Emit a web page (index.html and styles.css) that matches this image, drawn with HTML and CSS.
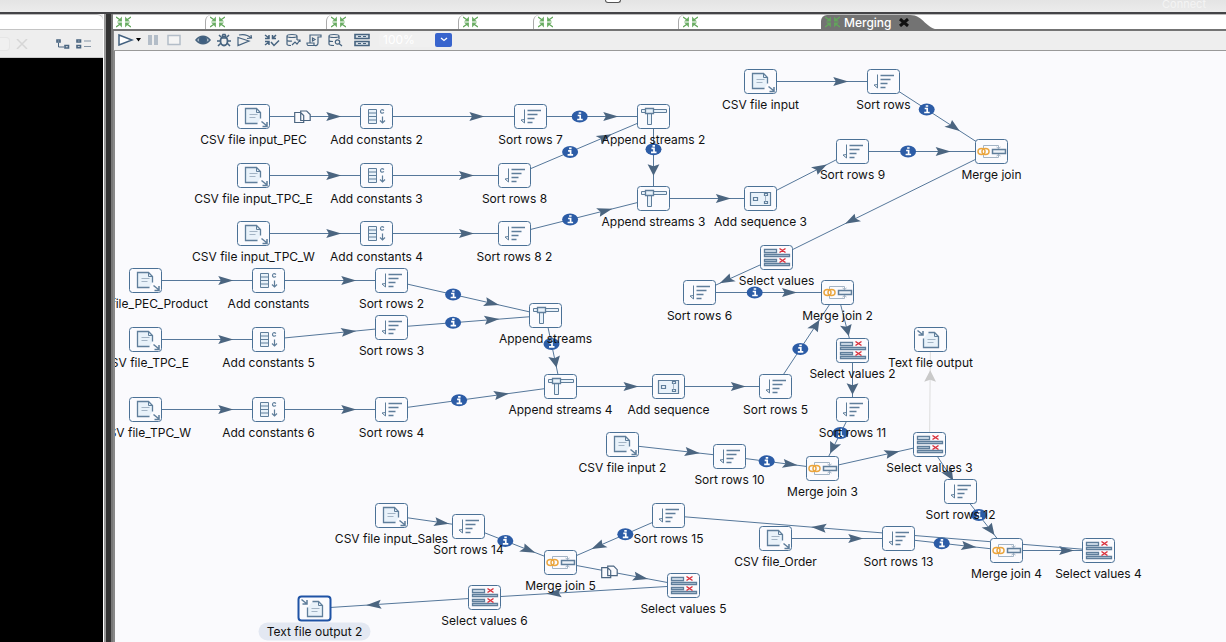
FILE: index.html
```html
<!DOCTYPE html>
<html lang="en">
<head>
<meta charset="utf-8">
<title>Merging</title>
<link rel="stylesheet" href="styles.css">
</head>
<body>
<svg class="defs" aria-hidden="true">
  <symbol id="trans" viewBox="0 0 15 12"><path d="M0 1l5 3.500M15 1l-5 3.500M0 11l5-3.500M15 11l-5-3.500" fill="none" stroke="currentColor" stroke-width="1.400"/><path d="M6 .500v5H1zM9 .500v5h5zM6 11.500v-5H1zM9 11.500v-5h5z" fill="currentColor" opacity=".85"/></symbol>
</svg>
<header class="titlebar"><span class="handle"></span><span class="connect">Connect</span></header>
<div class="workspace">
  <aside class="side">
    <div class="side-tabs"></div>
    <div class="side-tools">
      <input class="filter" type="text" aria-label="Filter">
      <button class="clear" aria-label="Clear filter"><svg width="12" height="10" viewBox="0 0 12 10"><path d="M1 0l10 10M11 0L1 10" stroke="#d6d6d6" stroke-width="1.500"/></svg></button>
      <button aria-label="Expand all"><svg width="14" height="10" viewBox="0 0 14 10" fill="none" stroke="#4a6580"><path d="M1 1h3v2H1zM9 6.500h3.500v2.500H9z" stroke-width="1.600"/><path d="M2.500 4v4H8"/></svg></button>
      <button aria-label="Collapse all"><svg width="16" height="10" viewBox="0 0 16 10" fill="none" stroke="#4a6580"><path d="M1 1h3.500v2H1zM1 6.500h3.500v2.300H1z" stroke-width="1.600"/><path d="M8 2h7M8 7.500h7" stroke="#8495a6"/></svg></button>
    </div>
    <div class="tree"></div>
  </aside>
  <div class="sash"></div>
  <main class="editor">
    <nav class="tabs">
      <button class="tab w92" aria-label="Tab 1"><svg class="tab-icon"><use href="#trans"/></svg></button>
      <button class="tab w121" aria-label="Tab 2"><svg class="tab-icon"><use href="#trans"/></svg></button>
      <button class="tab w132" aria-label="Tab 3"><svg class="tab-icon"><use href="#trans"/></svg></button>
      <button class="tab w75" aria-label="Tab 4"><svg class="tab-icon"><use href="#trans"/></svg></button>
      <button class="tab w145" aria-label="Tab 5"><svg class="tab-icon"><use href="#trans"/></svg></button>
      <button class="tab w143" aria-label="Tab 6"><svg class="tab-icon"><use href="#trans"/></svg></button>
      <button class="tab active"><svg class="tab-icon"><use href="#trans"/></svg><span>Merging</span><svg class="close" width="12" height="9" viewBox="0 0 12 9"><path d="M2 1l8 7M10 1L2 8" stroke="#111" stroke-width="3"/></svg></button>
      <svg class="tab-tail" width="30" height="15" viewBox="0 0 30 15"><path d="M0 0C14 0 15 14 30 15H0z" fill="#737373"/></svg>
    </nav>
    <div class="toolbar">
      <div class="group run">
        <button aria-label="Run"><svg width="16" height="12" viewBox="0 0 16 12"><path d="M1 1l13 5-13 5z" fill="#fff" stroke="#43617f" stroke-width="1.500"/></svg></button>
        <button aria-label="Run options"><svg width="6" height="4" viewBox="0 0 6 4"><path d="M0 0h5L2.500 3.500z"/></svg></button>
      </div>
      <div class="group halt">
        <button aria-label="Pause"><svg width="12" height="12" viewBox="0 0 12 12" fill="#b3bdc8"><path d="M1 1h4v10H1zM7 1h4v10H7z"/></svg></button>
        <button aria-label="Stop"><svg width="14" height="12" viewBox="0 0 14 12"><path d="M1 1.500h12v9H1z" fill="#f4f4f4" stroke="#b3bdc8" stroke-width="1.500"/></svg></button>
      </div>
      <div class="group">
        <button aria-label="Preview"><svg class="tool" viewBox="0 0 16 14"><path d="M1 7c4-5 10-5 14 0-4 5-10 5-14 0z" fill="#a9b9c9" stroke-width="1.500"/><ellipse cx="8" cy="7" rx="3.500" ry="3.500" fill="#3f5f80"/></svg></button>
        <button aria-label="Debug"><svg class="tool" viewBox="0 0 16 14"><ellipse cx="8" cy="8" rx="3.500" ry="4.500" stroke-width="1.800"/><path d="M5 5h6M5 4L3 2M11 4l2-2M5 8H1M11 8h4M5 10l-3 3M11 10l3 3M6 3.500l1-2h2l1 2" stroke-width="1.500"/></svg></button>
        <button aria-label="Replay"><svg class="tool" viewBox="0 0 16 14"><path d="M1 4.500v8l11-4.500zM2 2c5-1 9 0 12 3M10 5.500l4.500-.5-.5-3"/></svg></button>
      </div>
      <div class="group">
        <button aria-label="Verify"><svg class="tool" viewBox="0 0 16 14"><path d="M1 2l4 3M5 2v3.500H1M12 2L9 5M8.500 2v3.500H12M1 12l4-3M5 12V8.500H1M7 9l3 3.500 5-5" stroke-width="1.500"/></svg></button>
        <button aria-label="Impact"><svg class="tool" viewBox="0 0 16 14"><path d="M12 7V3c0-2-10-2-10 0v8c0 1 2 1.500 4 1.500M2 3c0 2 10 2 10 0M2 7c0 1 3 1.500 5 1M7 12l3-3 2 2 3-4M12 7h3v2"/></svg></button>
        <button aria-label="SQL"><svg class="tool" viewBox="0 0 16 14"><path d="M4 10V2h11v2h-3v6c0 3-3 2.500-3 2.500H2c-1 0-1-2.500-1-2.500h7v2M6.500 5v3L9 6.500z"/></svg></button>
        <button aria-label="Explore database"><svg class="tool" viewBox="0 0 16 14"><path d="M12 6V3C12 1 2 1 2 3v8c0 1 2 1.500 5 1.500M2 3c0 2 10 2 10 0M2 7c0 1 2 1.500 4 1.500"/><circle cx="10.500" cy="9" r="2.200"/><path d="M12 10.500l3 2.500"/></svg></button>
      </div>
      <div class="group">
        <button aria-label="Show results"><svg class="tool" viewBox="0 0 16 14"><path d="M1 1.500h14v4H1zM1 8.500h14v4H1z" fill="#dce3ea" stroke-width="1.600"/><path d="M4 3.500h3M9 3.500h3M4 10.500h3M9 10.500h3"/></svg></button>
      </div>
      <label class="zoom"><select aria-label="Zoom"><option>100%</option></select><span class="drop"><svg width="8" height="5" viewBox="0 0 8 5"><path d="M1 1l3 2.500L7 1" fill="none" stroke="#fff" stroke-width="1.300"/></svg></span></label>
    </div>
    <svg class="canvas" id="canvas" role="img" aria-label="Transformation graph"></svg>
  </main>
</div>
<script src="graph.js"></script>
</body>
</html>
```

FILE: styles.css
```css
* { box-sizing: border-box; }
body {
  margin: 0;
  height: 100vh;
  display: flex;
  flex-direction: column;
  overflow: hidden;
  font-family: Inter, "Liberation Sans", sans-serif;
  font-size: 12px;
  background: #eee;
}
button { border: 0; padding: 0; background: none; font: inherit; display: flex; align-items: center; }
svg { display: block; }
.defs { position: absolute; width: 0; height: 0; }

.titlebar {
  height: 14px;
  flex: none;
  display: grid;
  grid-template-columns: 1fr 16px 1fr;
  background: linear-gradient(#e4e4e4, #ececec);
  border-bottom: 2px solid #444447;
}
.handle { grid-column: 2; height: 3px; margin-right: -4px; margin-left: 4px; background: #fff; border: 1px solid #555; border-top: 0; border-radius: 0 0 3px 3px; }
.handle { margin: 0; }
.connect { grid-column: 3; justify-self: end; padding-right: 20px; font-size: 11px; line-height: 9px; color: #f4f4f4; }

.workspace { flex: 1; display: flex; min-height: 0; }
.side { width: 104px; flex: none; display: flex; flex-direction: column; border-right: 1px solid #fff; }
.side-tabs { height: 16px; background: #fff; border-top: 1px solid #bbb; border-bottom: 1px solid #c4c4c4; border-radius: 0 6px 0 0; }
.side-tools { height: 28px; display: flex; align-items: center; gap: 6px; border-bottom: 1px solid #ccc; }
.filter { width: 10px; height: 14px; padding: 0; border: 1px solid #e6e6e6; border-left: 0; border-radius: 0 4px 4px 0; background: #f0f0f0; }
.clear { margin-right: 22px; }
.tree { flex: 1; background: #000; }
.sash { width: 9px; flex: none; background: #333; border-left: 2px solid #999; border-right: 2px solid #777; }

.editor { flex: 1; min-width: 0; display: flex; flex-direction: column; }
.tabs { height: 17px; flex: none; display: flex; background: #fff; border-top: 1px solid #bbb; border-bottom: 2px solid #737373; }
.tab { padding-left: 4px; flex: none; border-left: 1px solid #aaa; border-top-left-radius: 6px; }
.tab:first-child { border-left: 0; padding-left: 3px; }
.tab-icon { width: 15px; height: 12px; color: #62a85a; }
.w75 { width: 75px; }
.w92 { width: 92px; }
.w121 { width: 121px; }
.w132 { width: 132px; }
.w143 { width: 143px; }
.w145 { width: 145px; }
.active { gap: 4px; background: #737373; border-left: 0; color: #fff; font-weight: 500; }
.close { margin-left: 2px; }
.toolbar { height: 20px; flex: none; display: flex; align-items: center; gap: 11px; padding: 0 0 2px 4px; background: #eee; border-left: 1px solid #888; border-bottom: 1px solid #999; }
.group { display: flex; align-items: center; gap: 5px; }
.run { gap: 2px; }
.group.halt { gap: 8px; margin-left: -6px; margin-right: 3px; }
.tool { width: 16px; height: 14px; fill: none; stroke: #46637f; stroke-width: 1.2; }
.zoom { display: flex; height: 14px; margin-left: -2px; background: #f0f0f0; border-radius: 3px; }
.zoom select { width: 56px; padding: 0 4px; border: 0; background: none; appearance: none; color: #fff; font: inherit; line-height: 14px; }
.drop { width: 17px; display: grid; place-items: center; border-radius: 2px; background: #3864cd; }

.canvas { flex: 1; width: 100%; min-height: 0; overflow: hidden; background: #fafafd; border-left: 2px solid #888; }
.hop { stroke: #55779a; stroke-width: 1; }
.arrow { fill: #4b6580; }
.hop.off { stroke: #dedede; }
.arrow.off { fill: #c9c9c9; }
.badge { fill: #2c5ca6; }
.badge-mark { fill: none; stroke: #fff; stroke-width: 1.7; }
.copy { fill: #fafafd; stroke: #4b6580; stroke-width: 1.2; }
.box { fill: #fbfbfe; stroke: #4b7196; stroke-width: 1; }
.box.selected { stroke: #1f53a5; stroke-width: 2; }
.glyph { fill: none; stroke: #5f7e9b; stroke-width: 1; }
.glyph .pale { fill: #e9f2fa; }
.glyph .soft { stroke: #a3b4c5; }
.glyph .ring { stroke: #eaa53d; stroke-width: 1.5; }
.glyph .cross { stroke: #d9303c; stroke-width: 1.5; }
.label { fill: #111; font-size: 12px; text-anchor: middle; }
.pill { fill: #e3e8f2; }
```

FILE: graph.js
```js
// Scroll position of the canvas over the graph.
const SCROLL = { x: 115, y: 51 };
// Horizontal to vertical ratio of the drawing.
const ASPECT = 1.31;

const steps = {
  pec: ["csv", 253, 116, "CSV file input_PEC"],
  tpcE: ["csv", 253, 175, "CSV file input_TPC_E"],
  tpcW: ["csv", 253, 233, "CSV file input_TPC_W"],
  c2: ["constants", 376, 116, "Add constants 2"],
  c3: ["constants", 376, 175, "Add constants 3"],
  c4: ["constants", 376, 233, "Add constants 4"],
  s7: ["sort", 530, 116, "Sort rows 7"],
  s8: ["sort", 514, 175, "Sort rows 8"],
  s82: ["sort", 514, 233, "Sort rows 8 2"],
  a2: ["append", 653, 116, "Append streams 2"],
  a3: ["append", 653, 198, "Append streams 3"],
  q3: ["sequence", 760, 198, "Add sequence 3"],
  input: ["csv", 760, 81, "CSV file input"],
  s: ["sort", 883, 81, "Sort rows"],
  s9: ["sort", 852, 151, "Sort rows 9"],
  m: ["merge", 991, 151, "Merge join"],
  v: ["select", 776, 257, "Select values"],
  s6: ["sort", 699, 292, "Sort rows 6"],
  m2: ["merge", 837, 292, "Merge join 2"],
  v2: ["select", 852, 350, "Select values 2"],
  out: ["output", 930, 339, "Text file output"],
  product: ["csv", 145, 280, "CSV file_PEC_Product"],
  fileE: ["csv", 145, 339, "CSV file_TPC_E"],
  fileW: ["csv", 145, 409, "CSV file_TPC_W"],
  c: ["constants", 268, 280, "Add constants"],
  c5: ["constants", 268, 339, "Add constants 5"],
  c6: ["constants", 268, 409, "Add constants 6"],
  s2: ["sort", 391, 280, "Sort rows 2"],
  s3: ["sort", 391, 327, "Sort rows 3"],
  s4: ["sort", 391, 409, "Sort rows 4"],
  a: ["append", 545, 315, "Append streams"],
  a4: ["append", 560, 386, "Append streams 4"],
  q: ["sequence", 668, 386, "Add sequence"],
  s5: ["sort", 775, 386, "Sort rows 5"],
  s11: ["sort", 852, 409, "Sort rows 11"],
  input2: ["csv", 622, 444, "CSV file input 2"],
  s10: ["sort", 729, 456, "Sort rows 10"],
  m3: ["merge", 822, 468, "Merge join 3"],
  v3: ["select", 929, 444, "Select values 3"],
  s12: ["sort", 960, 491, "Sort rows 12"],
  m4: ["merge", 1006, 550, "Merge join 4"],
  v4: ["select", 1098, 550, "Select values 4"],
  order: ["csv", 775, 538, "CSV file_Order"],
  s13: ["sort", 898, 538, "Sort rows 13"],
  s15: ["sort", 668, 515, "Sort rows 15"],
  sales: ["csv", 391, 515, "CSV file input_Sales"],
  s14: ["sort", 468, 526, "Sort rows 14"],
  m5: ["merge", 560, 562, "Merge join 5"],
  v5: ["select", 683, 585, "Select values 5"],
  v6: ["select", 484, 597, "Select values 6"],
  out2: ["output", 314, 608, "Text file output 2", true]
};

const hops = [
  ["pec", "c2", "copy"], ["tpcE", "c3"], ["tpcW", "c4"], ["c2", "s7"], ["c3", "s8"], ["c4", "s82"],
  ["s7", "a2", "info"], ["s8", "a2", "info"], ["s82", "a3", "info"], ["a2", "a3", "info"],
  ["a3", "q3"], ["q3", "s9"], ["input", "s"], ["s", "m", "info"], ["s9", "m", "info"],
  ["m", "v"], ["v", "s6"], ["s6", "m2", "info"], ["m2", "v2"], ["v2", "s11"],
  ["product", "c"], ["fileE", "c5"], ["fileW", "c6"], ["c", "s2"], ["c5", "s3"], ["c6", "s4"],
  ["s2", "a", "info"], ["s3", "a", "info"], ["a", "a4", "info"], ["s4", "a4", "info"],
  ["a4", "q"], ["q", "s5"], ["s5", "m2", "info"], ["s11", "m3", "info"],
  ["input2", "s10"], ["s10", "m3", "info"], ["m3", "v3"], ["v3", "out", "off"],
  ["v3", "s12"], ["s12", "m4", "info"], ["order", "s13"], ["s13", "m4", "info"],
  ["m4", "v4"], ["v4", "s15"], ["s15", "m5", "info"], ["sales", "s14"], ["s14", "m5", "info"],
  ["m5", "v5", "copy"], ["v5", "v6"], ["v6", "out2"]
];

// Glyphs are drawn around the centre of a 32 by 24 box.
const glyphs = {
  csv: '<path class="pale" d="M4 7H-8V-8H3L7-4V2" stroke-width="1.300"/><path d="M3-8v4h4"/><path class="soft" d="M-4-2H4M-4 1H2"/><path d="M8 5l5 4M13.500 5.500V10H9" stroke-width="1.500"/>',
  output: '<path class="pale" d="M-7-1V8H8V-3L4-7H-2" stroke-width="1.300"/><path d="M4-7v4h4"/><path class="soft" d="M-3 0H5M-3 3H3"/><path d="M-13-9l5 4M-7.500-8.500v4H-12" stroke-width="1.500"/>',
  constants: '<path class="pale" d="M-8-7H0V7H-8zM-8-3.500H0M-8 0H0M-8 3.500H0"/><path d="M7.500-6C5-8 4-6 4-5s1 2.500 3.500 1M6 0V6M3.500 4L6 6.500 8.500 4" stroke-width="1.200"/>',
  sort: '<path d="M-6-7V6M-9.500 3.500L-6 6.500V3z"/><path d="M-3-6H10.500M-3-2H7M-3 2H4M-3 6H2" stroke-width="1.300"/>',
  append: '<path class="pale" d="M-12-7H13V-4H-12zM-6-3H-2V8H-6z"/><path class="pale" d="M-8-8H0V-3H-8z" stroke-width="1.300"/>',
  sequence: '<path class="pale" d="M-10-6H10V7H-10z" stroke-width="1.200"/><path d="M-7-1H-3V2H-7zM4-5H7V-3H4zM4 3H7V5H4z" stroke-width="1.200"/><path class="soft" d="M5-3V3"/>',
  merge: '<path class="soft" d="M-8-3V-6H7V-3M-8 3V6H7V3M5-4.500L7-3l2-1.500M5 4.500L7 3l2 1.500"/><ellipse class="ring" cx="-10" cy="0" rx="3.500" ry="3"/><ellipse class="ring" cx="-6" cy="0" rx="3.500" ry="3"/><path d="M1-2H14V2H1z" fill="#edf2f7" stroke-width="1.500"/>',
  select: '<path class="pale" d="M-12-8H0V-5H-12zM-12-3H13V-1H-12zM-12 2H0V4H-12zM-12 6H13V8H-12z" stroke-width="1.300"/><path class="cross" d="M3-9l6 4M9-9l-6 4M3 1l6 4M9 1l-6 4"/>'
};

const links = [], boxes = [], labels = [];

for (const [from, to, kind] of hops) {
  const [, x1, y1] = steps[from], [, x2, y2] = steps[to];
  const dx = x2 - x1, dy = y2 - y1;
  const angle = Math.atan2(dy, dx / ASPECT) * 180 / Math.PI;
  const tip = .65 + 6 / Math.hypot(dx / ASPECT, dy);
  const off = kind === "off" ? " off" : "";
  links.push(`<line class="hop${off}" x1="${x1}" y1="${y1}" x2="${x2}" y2="${y2}"/>`);
  links.push(`<path class="arrow${off}" transform="translate(${x1 + dx * tip} ${y1 + dy * tip}) scale(${ASPECT} 1) rotate(${angle})" d="M0 0L-11.500-4.500-9.500 0-11.500 4.500z"/>`);
  const at = `translate(${x1 + dx * .4} ${y1 + dy * .4})`;
  if (kind === "info") {
    links.push(`<g transform="${at}"><ellipse class="badge" rx="8" ry="6"/><path class="badge-mark" d="M-1-3.500H1.500M-2-1H.5V3M-2.500 3H3"/></g>`);
  }
  if (kind === "copy") {
    links.push(`<path class="copy" transform="${at}" d="M-2-5.500H4L7.500-2V4H-2zM-8-4H-2L1-1V6H-8z"/>`);
  }
}

for (const [type, x, y, name, selected] of Object.values(steps)) {
  boxes.push(`<rect class="box${selected ? " selected" : ""}" x="${x - 16}" y="${y - 12}" width="32" height="24" rx="3"/><g class="glyph" transform="translate(${x} ${y})">${glyphs[type]}</g>`);
  if (selected) boxes.push(`<rect class="pill" x="${x - 56}" y="${y + 14}" width="112" height="18" rx="9"/>`);
  labels.push(`<text class="label" x="${x}" y="${y + 27}">${name}</text>`);
}

// The half pixel keeps one-pixel strokes sharp.
document.getElementById("canvas").innerHTML =
  `<g transform="translate(${.5 - SCROLL.x} ${.5 - SCROLL.y})">${links.join("")}${boxes.join("")}${labels.join("")}</g>`;
```
